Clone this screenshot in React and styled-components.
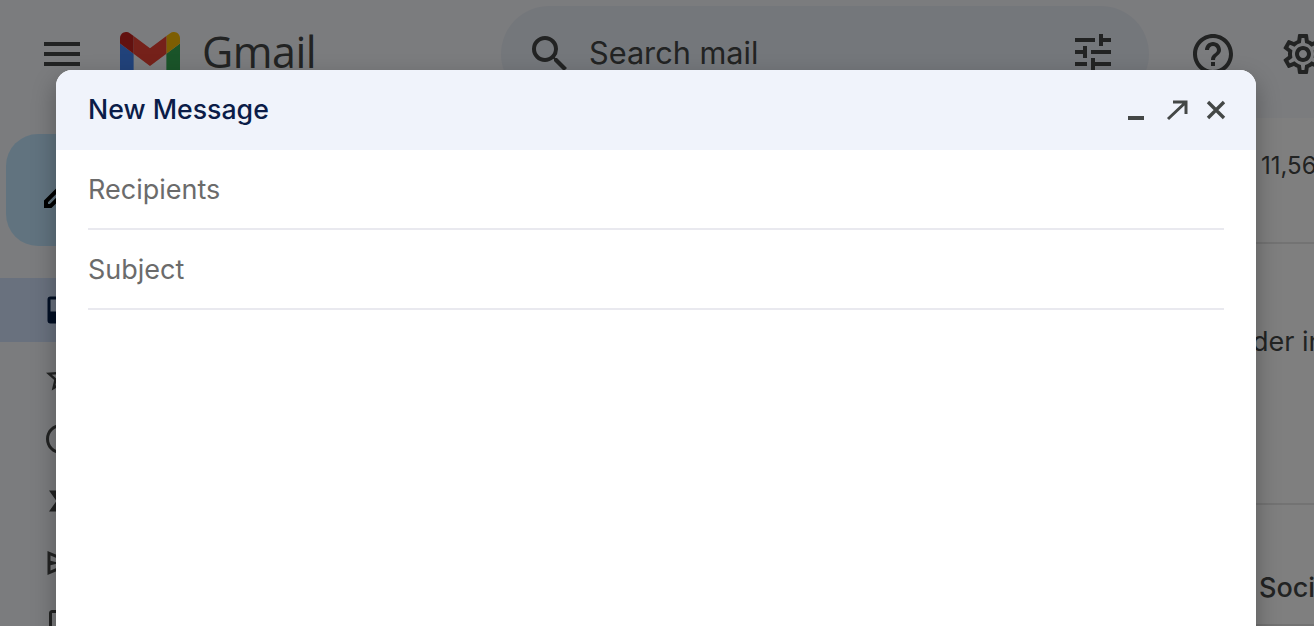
import React from "react";
import styled, { createGlobalStyle } from "styled-components";
import {
  MdMenu, MdSearch, MdTune, MdHelpOutline, MdOutlineSettings, MdOutlineCreate,
  MdStarBorder, MdAccessTime, MdOutlineLabelImportant, MdOutlineInsertDriveFile,
} from "react-icons/md";

const Global = createGlobalStyle`
  html, body { margin: 0; padding: 0; height: 100%; overflow: hidden; }
  body { font-family: Inter, "Noto Sans", sans-serif; background: #f6f8fc; }
`;

const Page = styled.div`
  position: relative;
  width: 1314px;
  height: 626px;
  overflow: hidden;
  background: #f6f8fc;
  color: #1f1f1f;
`;

const TopBar = styled.header`
  display: flex;
  align-items: flex-start;
  height: 118px;
  padding: 6px 0 0 38px;
  box-sizing: border-box;
`;

const IconSlot = styled.span`
  display: block;
  flex: none;
  width: 48px;
  height: 48px;
  margin: ${(p) => p.$margin || "24px 0 0"};
  color: #444746;
  svg { display: block; }
`;

const Logo = styled.svg`
  flex: none;
  width: 60px;
  height: 45px;
  margin: 26px 0 0 34px;
`;

const Wordmark = styled.span`
  flex: none;
  width: 299px;
  margin: 19px 0 0 22px;
  font-family: "Open Sans", sans-serif;
  font-size: 43px;
  line-height: 54px;
  color: #444746;
  letter-spacing: -0.5px;
`;

const SearchBar = styled.div`
  flex: none;
  display: flex;
  align-items: flex-start;
  width: 648px;
  height: 96px;
  padding-left: 25px;
  box-sizing: border-box;
  border-radius: 48px;
  background: #e9eef6;
`;

const SearchText = styled.span`
  flex: none;
  width: 480px;
  margin: 28px 0 0 15px;
  font-size: 30.7px;
  line-height: 38px;
  color: #444746;
`;

const Body = styled.div`
  display: flex;
  height: 508px;
`;

const Sidebar = styled.nav`
  flex: none;
  width: 280px;
  padding-top: 16px;
`;

const Compose = styled.div`
  display: flex;
  align-items: center;
  width: 260px;
  height: 112px;
  margin-left: 6px;
  padding-left: 32px;
  box-sizing: border-box;
  border-radius: 32px;
  background: #c2e7ff;
  color: #000;
  svg { display: block; }
`;

const NavRow = styled.div`
  display: flex;
  align-items: center;
  height: ${(p) => (p.$active ? 64 : 62)}px;
  margin-bottom: ${(p) => (p.$active ? 4 : 0)}px;
  padding-left: 43px;
  border-radius: 0 32px 32px 0;
  background: ${(p) => (p.$active ? "#d3e3fd" : "transparent")};
  color: ${(p) => (p.$active ? "#041e49" : "#444746")};
  svg { display: block; }
`;

const InboxList = styled.div`
  margin-top: 32px;
`;

const Main = styled.main`
  flex: 1;
  min-width: 0;
  overflow: hidden;
  background: #fff;
  border-radius: 32px 0 0 0;
`;

const MailRow = styled.div`
  height: ${(p) => p.$height}px;
  padding: ${(p) => p.$top}px 0 0 ${(p) => p.$indent}px;
  box-sizing: border-box;
  border-bottom: 2px solid #e6e6e6;
  font-size: ${(p) => p.$size || 27}px;
  line-height: 32px;
  font-weight: ${(p) => p.$weight || 400};
  color: #444746;
  white-space: nowrap;
  overflow: hidden;
`;

const Scrim = styled.div`
  position: absolute;
  inset: 0;
  background: rgba(0, 0, 0, 0.5);
`;

const Dialog = styled.section`
  position: absolute;
  left: 56px;
  top: 70px;
  width: 1200px;
  height: 640px;
  background: #fff;
  border-radius: 16px;
  overflow: hidden;
  box-shadow: 0 10px 24px rgba(0, 0, 0, 0.3);
`;

const DialogHeader = styled.div`
  display: flex;
  align-items: center;
  height: 80px;
  padding: 0 24px 0 32px;
  background: #f0f3fb;
`;

const DialogTitle = styled.h2`
  flex: 1;
  margin: 0 0 2px;
  font-size: 26.7px;
  font-weight: 500;
  line-height: 32px;
  color: #0b1c48;
`;

const HeaderActions = styled.div`
  display: flex;
  gap: 8px;
  color: #444746;
  svg { display: block; }
`;

const Field = styled.div`
  display: flex;
  align-items: center;
  height: 80px;
  margin: 0 32px;
  box-sizing: border-box;
  border-bottom: 2px solid #e9e9ef;
  font-size: 27px;
  color: #6b6b6b;
`;

const MinimizeIcon = () => (
  <svg width="32" height="32" viewBox="0 0 32 32" fill="currentColor">
    <rect x="8" y="22" width="16" height="4" />
  </svg>
);

const ExpandIcon = () => (
  <svg width="32" height="32" viewBox="0 0 32 32" fill="none" stroke="currentColor" strokeWidth="3">
    <path d="M13 8h13v12M26 8L8 25" />
  </svg>
);

const CloseIcon = () => (
  <svg width="32" height="32" viewBox="0 0 32 32" fill="none" stroke="currentColor" strokeWidth="3.4">
    <path d="M8 8l16 16M24 8L8 24" />
  </svg>
);

const InboxIcon = () => (
  <svg width="36" height="36" viewBox="0 0 24 24" fill="currentColor" fillRule="evenodd">
    <path d="M19 3H5a2 2 0 0 0-2 2v14a2 2 0 0 0 2 2h14a2 2 0 0 0 2-2V5a2 2 0 0 0-2-2zM5 5h14v8h-4c0 1.66-1.34 3-3 3s-3-1.34-3-3H5V5z" />
  </svg>
);

const SendIcon = () => (
  <svg width="36" height="36" viewBox="0 0 24 24" fill="currentColor">
    <path d="M3 20V4l19 8-19 8zm2-3 11.85-5L5 7v3.5l6 1.5-6 1.5V17z" />
  </svg>
);

export default function App() {
  return (
    <Page>
      <Global />
      <TopBar>
        <IconSlot><MdMenu size={48} /></IconSlot>
        <Logo viewBox="52 42 88 66">
          <path fill="#4285f4" d="M58 108h14V74L52 59v43c0 3.32 2.69 6 6 6" />
          <path fill="#34a853" d="M120 108h14c3.32 0 6-2.69 6-6V59l-20 15" />
          <path fill="#fbbc04" d="M120 48v26l20-15v-8c0-7.42-8.47-11.65-14.4-7.2" />
          <path fill="#ea4335" d="M72 74V48l24 18 24-18v26L96 92" />
          <path fill="#c5221f" d="M52 51v8l20 15V48l-5.6-4.2c-5.94-4.45-14.4-.22-14.4 7.2" />
        </Logo>
        <Wordmark>Gmail</Wordmark>
        <SearchBar>
          <IconSlot><MdSearch size={48} /></IconSlot>
          <SearchText>Search mail</SearchText>
          <IconSlot $margin="22px 0 0"><MdTune size={48} /></IconSlot>
        </SearchBar>
        <IconSlot $margin="24px 0 0 40px"><MdHelpOutline size={48} /></IconSlot>
        <IconSlot $margin="24px 0 0 42px"><MdOutlineSettings size={48} /></IconSlot>
      </TopBar>
      <Body>
        <Sidebar>
          <Compose><MdOutlineCreate size={48} /></Compose>
          <InboxList>
            <NavRow $active><InboxIcon /></NavRow>
            <NavRow><MdStarBorder size={36} /></NavRow>
            <NavRow><MdAccessTime size={36} /></NavRow>
            <NavRow><MdOutlineLabelImportant size={36} /></NavRow>
            <NavRow><SendIcon /></NavRow>
            <NavRow><MdOutlineInsertDriveFile size={36} /></NavRow>
          </InboxList>
        </Sidebar>
        <Main>
          <MailRow $height={126} $top={32} $indent={981} $size={24}>11,564</MailRow>
          <MailRow $height={261} $top={82} $indent={972}>der in</MailRow>
          <MailRow $height={121} $top={67} $indent={979} $weight={500}>Social</MailRow>
        </Main>
      </Body>
      <Scrim />
      <Dialog>
        <DialogHeader>
          <DialogTitle>New Message</DialogTitle>
          <HeaderActions>
            <MinimizeIcon />
            <ExpandIcon />
            <CloseIcon />
          </HeaderActions>
        </DialogHeader>
        <Field>Recipients</Field>
        <Field>Subject</Field>
      </Dialog>
    </Page>
  );
}
